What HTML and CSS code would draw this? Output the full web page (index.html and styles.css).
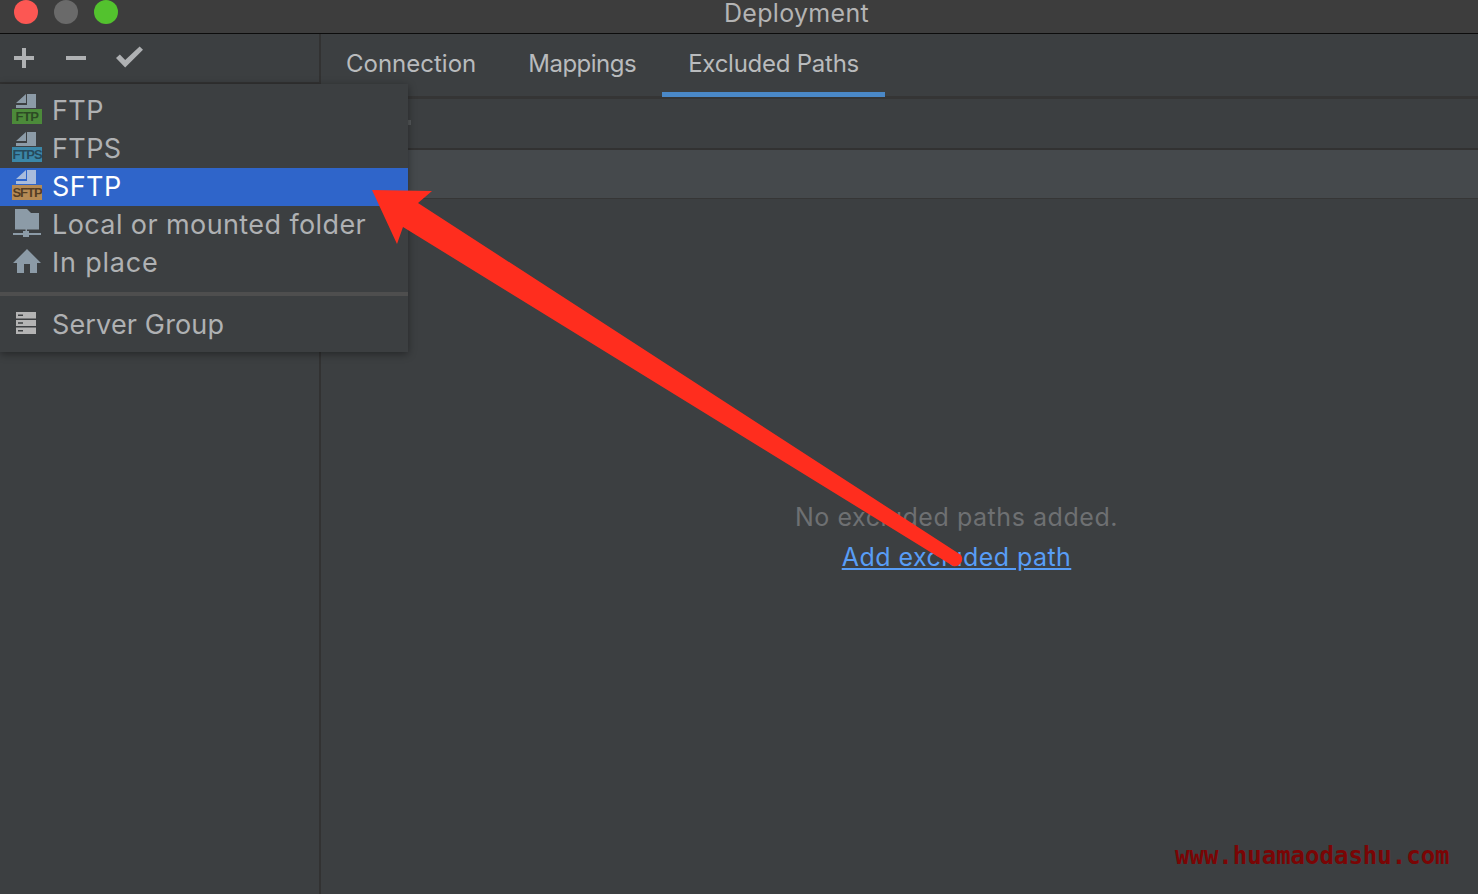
FILE: index.html
```html
<!DOCTYPE html>
<html lang="en">
<head>
    <meta charset="UTF-8" />
    <title>Deployment</title>
    <link rel="stylesheet" href="styles.css">
</head>
<body>
    <div class="titlebar">
        <div class="lights">
            <span class="light red"></span>
            <span class="light gray"></span>
            <span class="light green"></span>
        </div>
        <div class="title">Deployment</div>
    </div>

    <div class="content">
        <div class="sidebar">
            <div class="toolbar">
                <svg class="tool" width="20" height="20" viewBox="0 0 20 20"><path d="M8 0h4v8h8v4h-8v8H8v-8H0V8h8z"/></svg>
                <svg class="tool" width="20" height="4" viewBox="0 0 20 4"><path d="M0 0h20v4H0z"/></svg>
                <svg class="tool check" width="27" height="22" viewBox="0 0 28 22"><path d="M0 12l4-3.500 5.500 5.500L24.500 0 28 3.500 9.500 22z"/></svg>
            </div>
        </div>

        <div class="main">
            <div class="tabs">
                <div class="tab">Connection</div>
                <div class="tab tighter">Mappings</div>
                <div class="tab tight active">Excluded Paths</div>
            </div>
            <div class="subbar"><span class="tick"></span></div>
            <div class="band"></div>
            <div class="empty">
                <p class="empty-text">No excluded paths added.</p>
                <a class="empty-link" href="#">Add excluded path</a>
            </div>
        </div>
    </div>

    <!-- add server popup -->
    <div class="menu">
        <div class="item">
            <span class="proto">
                <svg class="doc" width="20" height="14" viewBox="0 0 20 14"><path d="M0 9L10 0v9zM11 0h9v14H0v-3h11z"/></svg>
                <span class="tag ftp">FTP</span>
            </span>
            FTP
        </div>
        <div class="item">
            <span class="proto">
                <svg class="doc" width="20" height="14" viewBox="0 0 20 14"><path d="M0 9L10 0v9zM11 0h9v14H0v-3h11z"/></svg>
                <span class="tag ftps">FTPS</span>
            </span>
            FTPS
        </div>
        <div class="item selected">
            <span class="proto">
                <svg class="doc" width="20" height="14" viewBox="0 0 20 14"><path d="M0 9L10 0v9zM11 0h9v14H0v-3h11z"/></svg>
                <span class="tag sftp">SFTP</span>
            </span>
            SFTP
        </div>
        <div class="item">
            <span class="proto">
                <svg width="28" height="28" viewBox="0 0 28 28"><path d="M2 0h12l4 4h8v16.500H14V24h-1.500v-3.500H2zM0 24h10v-2h6v2h12v2H16v2h-6v-2H0z"/></svg>
            </span>
            Local or mounted folder
        </div>
        <div class="item wide">
            <span class="proto">
                <svg width="28" height="24" viewBox="0 0 28 24"><path d="M14 0l14 14h-4v10h-7v-9h-6v9H4V14H0z"/></svg>
            </span>
            In place
        </div>
        <div class="separator"></div>
        <div class="item narrow">
            <span class="proto">
                <svg class="doc" width="20" height="22" viewBox="0 0 20 22"><path class="rack" fill-rule="evenodd" d="M0 0h20v6.500H0zM2 2.500V4h5V2.500zM0 8h20v6H0zM2 10.300v1.500h5v-1.500zM0 15.500h20V22H0zM2 18v1.500h5V18z"/></svg>
            </span>
            Server Group
        </div>
    </div>

    <svg class="arrow" width="1478" height="894" viewBox="0 0 1478 894">
        <path d="M372 190L432 191 418 203 961 555Q964 560 960 564 957 567 953 566L403 227 397 244z"/>
    </svg>

    <div class="watermark">www.huamaodashu.com</div>
</body>
</html>
```

FILE: styles.css
```css
:root {
    --panel: #3c3f41;
    --line: #323232;
    --text: #afb1b3;
    --icon: #8c9ba7;
}

html, body {
    margin: 0;
    height: 100%;
}

body {
    font-family: Inter, 'Noto Sans', sans-serif;
    background-color: var(--panel);
    color: var(--text);
    display: flex;
    flex-direction: column;
    overflow: hidden;
}

.titlebar {
    height: 33px;
    flex: none;
    display: flex;
    align-items: center;
    background-color: #3d3d3d;
    border-bottom: 1px solid #0c0c0c;
    position: relative;
}

.lights {
    display: flex;
    gap: 16px;
    padding-left: 14px;
    margin-top: -9px;
}

.light {
    width: 24px;
    height: 24px;
    border-radius: 50%;
}

.red { background-color: #fc5753; }
.gray { background-color: #6a6a6a; }
.green { background-color: #53c22e; }

.title {
    position: absolute;
    left: 724px;
    top: -3px;
    font-size: 25px;
    line-height: 32px;
    letter-spacing: 0.3px;
    color: #b4b4b4;
}

.content {
    flex: 1;
    display: flex;
    min-height: 0;
}

.sidebar {
    width: 319px;
    flex: none;
    border-right: 2px solid var(--line);
}

.toolbar {
    height: 48px;
    display: flex;
    align-items: center;
    gap: 32px;
    padding-left: 14px;
    border-bottom: 2px solid var(--line);
}

.tool {
    fill: var(--text);
}

.check {
    margin: -2px 0 0 -2px;
}

.main {
    flex: 1;
    display: flex;
    flex-direction: column;
    min-width: 0;
}

.tabs {
    height: 62px;
    flex: none;
    display: flex;
    border-bottom: 3px solid #353535;
    margin-left: -1px;
}

.tab {
    padding: 0 26px;
    font-size: 24px;
    line-height: 60px;
    color: #b9bbbd;
    height: 63px;
    box-sizing: border-box;
}

.tab.tight {
    letter-spacing: -0.25px;
}

.tab.tighter {
    letter-spacing: -0.5px;
}

.tab.active {
    border-bottom: 5px solid #4a88c7;
}

.subbar {
    height: 51px;
    flex: none;
    display: flex;
    align-items: center;
    border-bottom: 2px solid var(--line);
    box-sizing: border-box;
}

.tick {
    width: 3px;
    height: 5px;
    margin-left: 87px;
    margin-top: -2px;
    background-color: #55585a;
}

.band {
    height: 48px;
    flex: none;
    background-color: #45494c;
    border-bottom: 1px solid #363636;
}

.empty {
    flex: 1;
    display: flex;
    flex-direction: column;
    align-items: center;
    padding: 303px 0 0 114px;
    font-size: 25px;
}

.empty-text {
    margin: 0 0 10px;
    line-height: 30px;
    letter-spacing: 0.55px;
    color: #6e7072;
}

.empty-link {
    line-height: 30px;
    letter-spacing: 0.45px;
    color: #589df6;
}

.menu {
    position: absolute;
    left: 0;
    top: 84px;
    width: 408px;
    height: 268px;
    padding-top: 8px;
    box-sizing: border-box;
    background-color: var(--panel);
    box-shadow: 0 2px 8px rgba(0, 0, 0, 0.4);
    font-size: 27px;
    letter-spacing: 0.4px;
}

.item {
    height: 38px;
    padding-bottom: 2px;
    box-sizing: border-box;
    display: flex;
    align-items: center;
    color: var(--text);
}

.item.wide {
    letter-spacing: 0.8px;
}

.item.narrow {
    letter-spacing: 0.15px;
}

.item.selected {
    background-color: #2f65ca;
    color: #ffffff;
}

.proto {
    width: 30px;
    margin: -2px 10px 0 12px;
    display: flex;
    flex-direction: column;
    align-items: center;
    fill: var(--icon);
}

.selected .proto {
    fill: #a9bcdc;
}

.doc {
    margin-right: 2px;
}

.rack {
    fill: #b4b4b4;
}

.tag {
    width: 30px;
    height: 15px;
    margin-top: 1px;
    font-size: 13px;
    font-weight: bold;
    line-height: 16px;
    letter-spacing: -1px;
    font-family: 'Liberation Sans', sans-serif;
    text-align: center;
}

.ftp {
    background-color: #4c8a3a;
    color: #2c4a24;
    letter-spacing: -0.5px;
}

.ftps {
    background-color: #3b87a8;
    color: #264a5c;
}

.sftp {
    background-color: #b58a55;
    color: #553e24;
}

.separator {
    height: 4px;
    margin: 10px 0;
    background-color: #4e4e4e;
}

.arrow {
    position: absolute;
    left: 0;
    top: 0;
    fill: #ff2d1e;
    pointer-events: none;
}

.watermark {
    position: absolute;
    left: 1175px;
    top: 842px;
    font-family: 'DejaVu Sans Mono', monospace;
    font-weight: bold;
    font-size: 24px;
    line-height: 28px;
    color: #7a0505;
}
```
